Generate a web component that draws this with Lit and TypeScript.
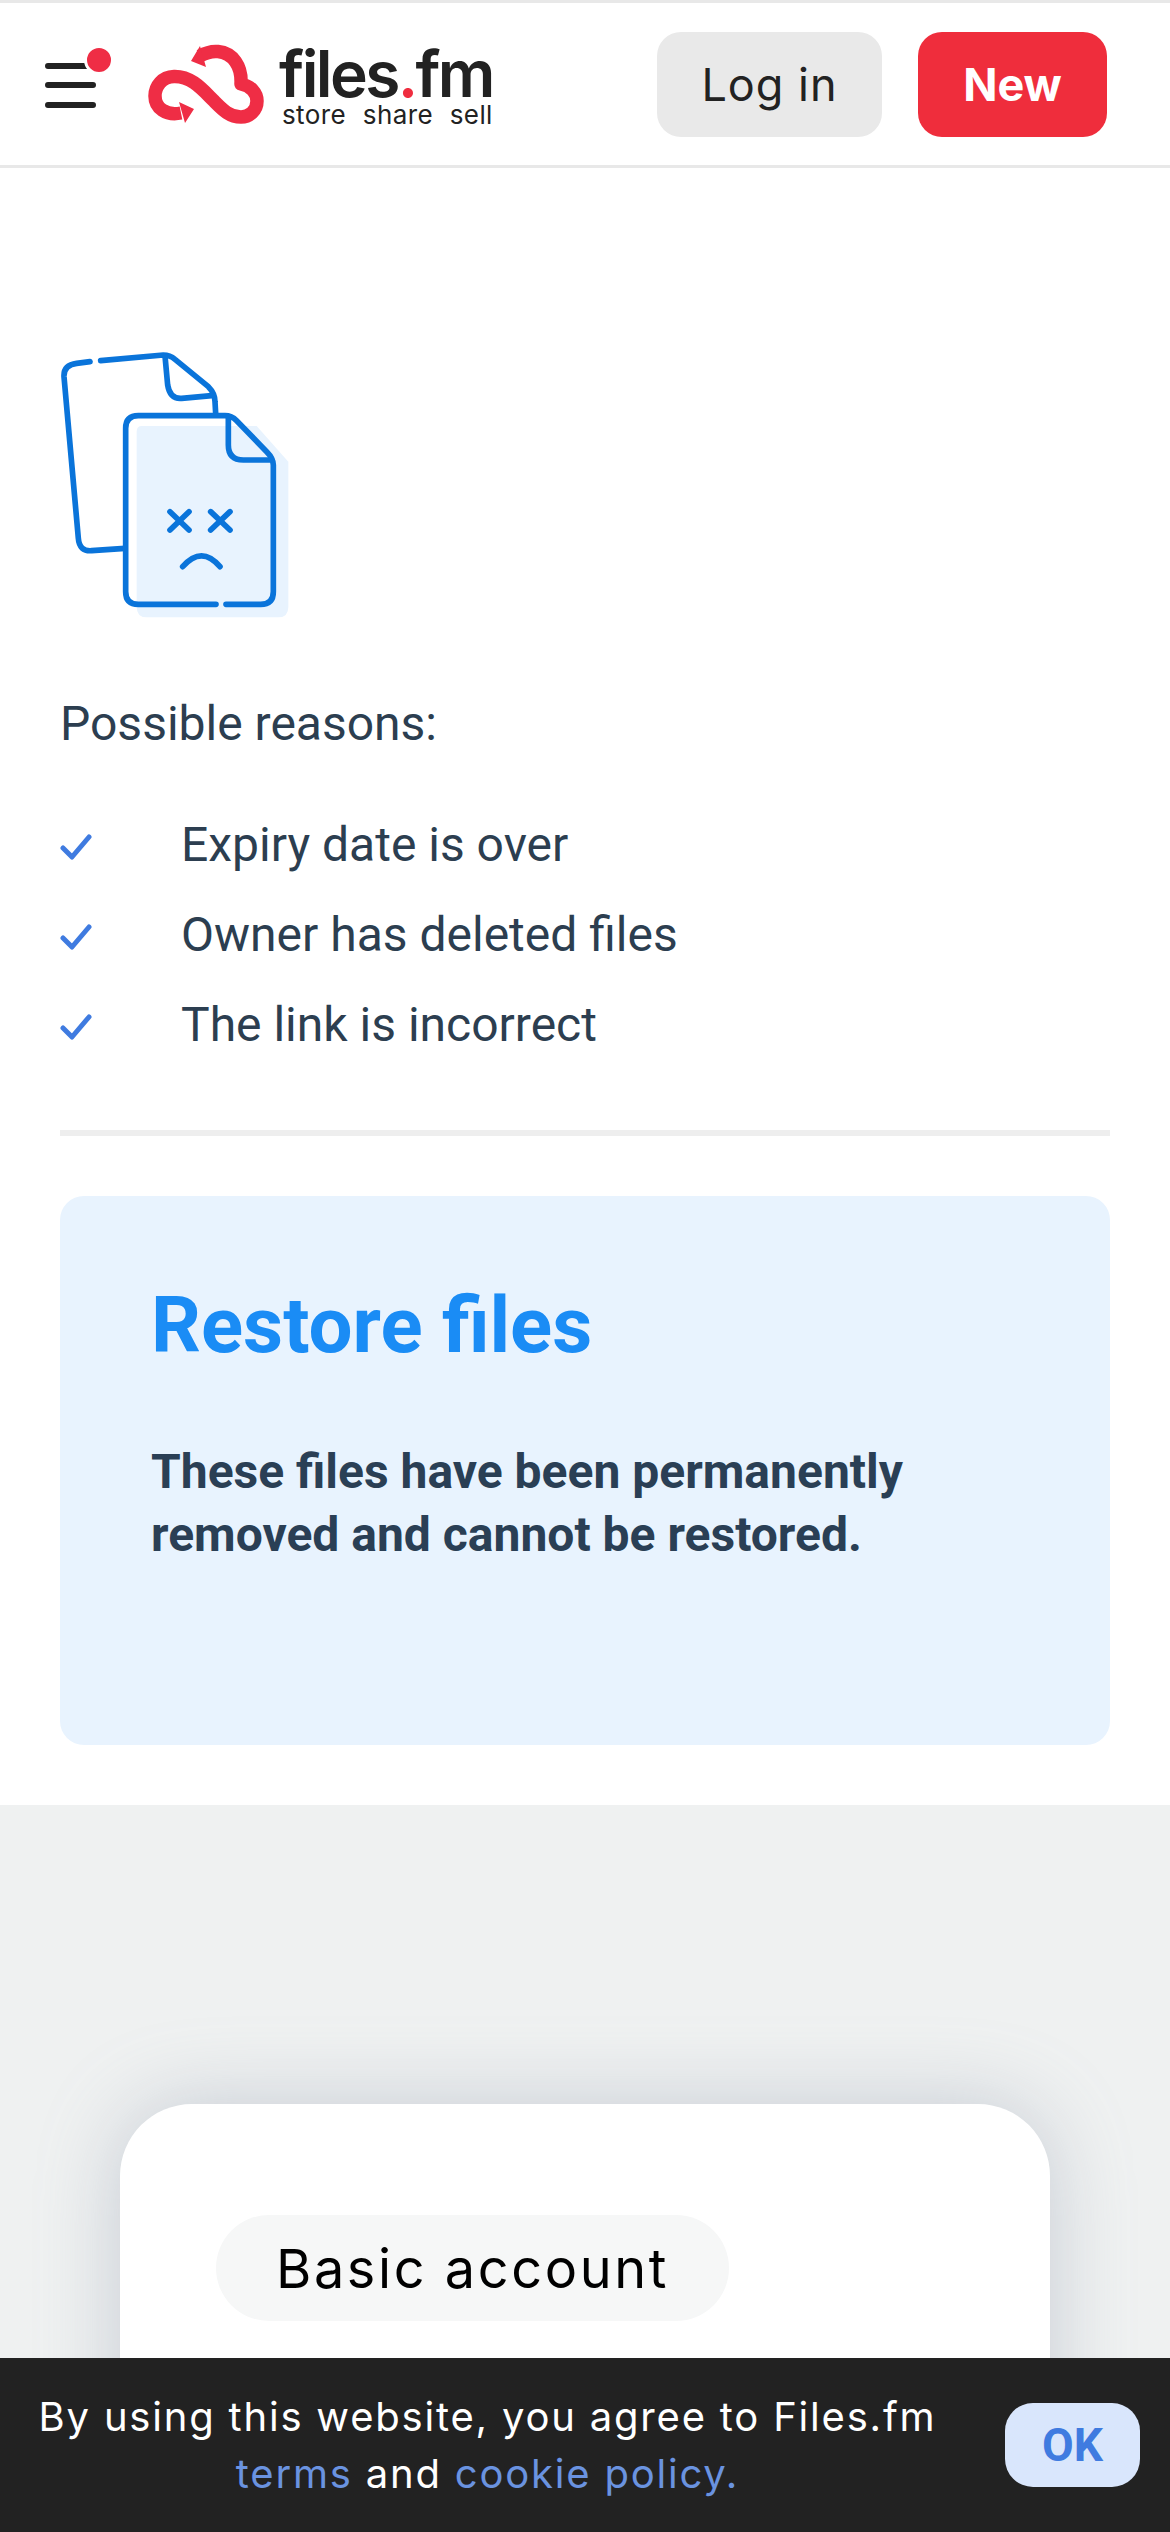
import { LitElement, html, css } from "lit";
import { customElement } from "lit/decorators.js";

const check = html`<svg class="check" viewBox="0 0 32 28" width="32" height="28"><path d="M3 15 L12 24 L29 4" fill="none" stroke="#3f7be0" stroke-width="5" stroke-linecap="round" stroke-linejoin="round"/></svg>`;

@customElement("app-root")
export class AppRoot extends LitElement {
  static styles = css`
    :host { display: flex; flex-direction: column; position: relative; width: 1170px; height: 2532px; overflow: hidden; background: #fff; font-family: Roboto, sans-serif; }
    * { box-sizing: border-box; }
    header { flex: none; height: 168px; border-top: 3px solid #e8e8e8; border-bottom: 3px solid #e8e8e8; display: flex; align-items: center; padding: 0 63px 0 45px; }
    .burger { flex: none; display: block; margin-right: 35px; }
    .logo { flex: none; display: block; margin-right: 15px; }
    .brand { display: flex; flex-direction: column; color: #222; font-family: Inter, sans-serif; width: 214px; padding-top: 6px; }
    .name { font-size: 64px; font-weight: 600; line-height: 56px; letter-spacing: -2.6px; white-space: nowrap; }
    .name b { color: #ef2d3f; font-weight: 600; }
    .tag { font-size: 26px; line-height: 26px; word-spacing: 9px; letter-spacing: 0.4px; white-space: nowrap; padding-left: 3px; }
    .actions { margin-left: auto; display: flex; gap: 36px; }
    .btn { height: 105px; border-radius: 24px; display: flex; align-items: center; justify-content: center; font-family: Inter, sans-serif; font-size: 45px; }
    .login { width: 225px; background: #e9e9e9; color: #222; letter-spacing: 1px; }
    .new { width: 189px; background: #ef2d3c; color: #fff; font-weight: 700; }
    main { flex: none; padding: 162px 60px 60px; color: #2c3e50; }
    .art { display: block; margin: 0 0 0 -20px; }
    .reasons { font-size: 48px; line-height: 60px; margin: 64px 0 60px; }
    ul { list-style: none; margin: 0; padding: 0; display: flex; flex-direction: column; gap: 30px; }
    li { display: flex; align-items: center; height: 60px; font-size: 48px; }
    .check { flex: none; margin-right: 89px; position: relative; top: 3px; }
    hr { border: 0; height: 6px; background: #eeeeee; margin: 76px 0 60px; }
    .card { height: 549px; border-radius: 24px; background: #e8f3fe; padding: 80px 91px; }
    h1 { margin: 0; font-size: 78px; line-height: 100px; font-weight: 700; color: #1a8cf5; }
    .card p { margin: 64px 0 0; font-size: 48px; line-height: 63px; font-weight: 700; color: #2a3f55; }
    .plans { flex: 1; background: #eff1f1; padding: 299px 120px 0; }
    .plan { height: 600px; background: #fff; border-radius: 72px; padding: 111px 96px; box-shadow: 0 0 80px rgba(140,150,170,0.4); }
    .pill { width: 513px; height: 106px; border-radius: 53px; background: #f6f7f7; display: flex; align-items: center; justify-content: center; font-family: Inter, sans-serif; font-size: 54px; letter-spacing: 2.6px; color: #000; }
    .cookie { position: absolute; left: 0; right: 0; bottom: 0; height: 174px; background: #222; display: flex; align-items: center; padding: 0 30px 0 0; }
    .msg { flex: 1; text-align: center; color: #fff; font-family: Inter, sans-serif; font-size: 40px; line-height: 57px; letter-spacing: 1.8px; margin-right: 30px; white-space: nowrap; }
    .msg a { color: #6a93e0; text-decoration: none; }
    .ok { flex: none; width: 135px; height: 84px; border-radius: 28px; background: #d9e6fc; color: #3f7be0; display: flex; align-items: center; justify-content: center; font-family: Roboto, sans-serif; font-weight: 700; font-size: 46px; }
  `;

  render() {
    return html`
      <header>
        <svg class="burger" width="68" height="76" viewBox="0 0 68 76" fill="none">
          <g stroke="#222" stroke-width="6" stroke-linecap="round"><path d="M3 20H48M3 39H48M3 59H48"/></g>
          <circle cx="54" cy="14" r="13.500" fill="#ef2d45" stroke="#fff" stroke-width="3"/>
        </svg>
        <svg class="logo" width="116" height="80" viewBox="147 48 116 80" fill="none">
          <path d="M199 60C206 56 212 55 217 55.500C232 57 241 70 240 88C250 90 256 97 256 105C256 115 248 121 240 121C228 121 221 113 212 104C201 93 190 80 173 80.500C161 81 154 90 154 100C154 112 165 120 180 117" stroke="#ef2d45" stroke-width="13.500" stroke-linejoin="round"/>
          <path d="M190 65L199 50L205 71Z M178 106L193 113L184 127Z" fill="#ef2d45"/>
        </svg>
        <div class="brand">
          <div class="name">files<b>.</b>fm</div>
          <div class="tag">store share sell</div>
        </div>
        <div class="actions">
          <div class="btn login">Log in</div>
          <div class="btn new">New</div>
        </div>
      </header>
      <main>
        <svg class="art" width="270" height="300" viewBox="0 0 810 900" fill="none">
          <path d="M305 288H650L745 395V830Q745 862 715 862H320Q290 862 290 830V305Q290 288 305 288Z" fill="#e8f3fe"/>
          <g stroke="#0a74da" stroke-width="17" stroke-linecap="round" stroke-linejoin="round">
            <path d="M150 95L110 100Q70 105 72 140L115 625Q118 665 155 662L255 655"/>
            <path d="M182 92L370 75Q390 75 405 88L505 170Q525 190 525 215L527 250"/>
            <path d="M375 78L383 165Q390 208 425 205L515 197"/>
            <path d="M528 823H295Q257 823 257 785V295Q257 257 295 257H555Q575 257 590 272L680 365Q700 385 700 405V785Q700 823 662 823H558"/>
            <path d="M565 262V345Q565 390 610 390H695"/>
            <path d="M390 545L447 600M447 545L390 600M512 545L570 600M570 545L512 600"/>
            <path d="M428 710Q485 645 540 710"/>
          </g>
        </svg>
        <div class="reasons">Possible reasons:</div>
        <ul>
          <li>${check}Expiry date is over</li>
          <li>${check}Owner has deleted files</li>
          <li>${check}The link is incorrect</li>
        </ul>
        <hr />
        <section class="card">
          <h1>Restore files</h1>
          <p>These files have been permanently<br />removed and cannot be restored.</p>
        </section>
      </main>
      <section class="plans">
        <div class="plan"><div class="pill">Basic account</div></div>
      </section>
      <div class="cookie">
        <div class="msg">By using this website, you agree to Files.fm<br /><a>terms</a> and <a>cookie policy.</a></div>
        <div class="ok">OK</div>
      </div>
    `;
  }
}
